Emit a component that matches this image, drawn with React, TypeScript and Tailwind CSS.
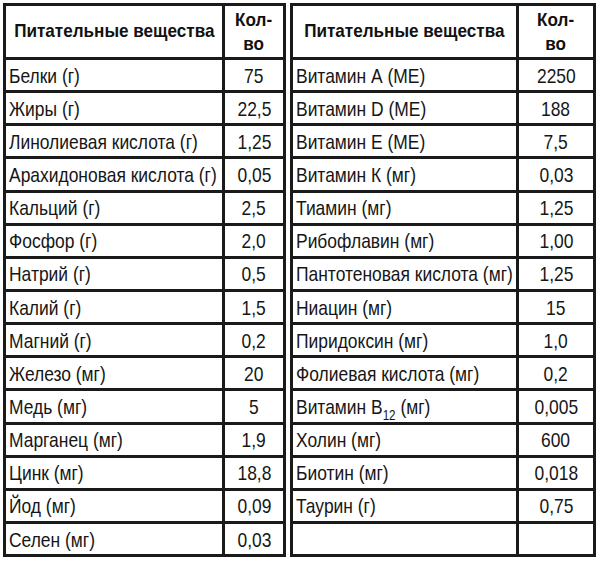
import React from "react";

type Row = { name: React.ReactNode; val: string };

const left: Row[] = [
  { name: "Белки (г)", val: "75" },
  { name: "Жиры (г)", val: "22,5" },
  { name: "Линолиевая кислота (г)", val: "1,25" },
  { name: "Арахидоновая кислота (г)", val: "0,05" },
  { name: "Кальций (г)", val: "2,5" },
  { name: "Фосфор (г)", val: "2,0" },
  { name: "Натрий (г)", val: "0,5" },
  { name: "Калий (г)", val: "1,5" },
  { name: "Магний (г)", val: "0,2" },
  { name: "Железо (мг)", val: "20" },
  { name: "Медь (мг)", val: "5" },
  { name: "Марганец (мг)", val: "1,9" },
  { name: "Цинк (мг)", val: "18,8" },
  { name: "Йод (мг)", val: "0,09" },
  { name: "Селен (мг)", val: "0,03" },
];

const right: Row[] = [
  { name: "Витамин А (МЕ)", val: "2250" },
  { name: "Витамин D (МЕ)", val: "188" },
  { name: "Витамин Е (МЕ)", val: "7,5" },
  { name: "Витамин К (мг)", val: "0,03" },
  { name: "Тиамин (мг)", val: "1,25" },
  { name: "Рибофлавин (мг)", val: "1,00" },
  { name: "Пантотеновая кислота (мг)", val: "1,25" },
  { name: "Ниацин (мг)", val: "15" },
  { name: "Пиридоксин (мг)", val: "1,0" },
  { name: "Фолиевая кислота (мг)", val: "0,2" },
  {
    name: (
      <>
        Витамин B<span className="text-[14px] relative top-[6px]">12</span> (мг)
      </>
    ),
    val: "0,005",
  },
  { name: "Холин (мг)", val: "600" },
  { name: "Биотин (мг)", val: "0,018" },
  { name: "Таурин (г)", val: "0,75" },
  { name: "", val: "" },
];

function Table({ rows, nameW, valW }: { rows: Row[]; nameW: string; valW: string }) {
  return (
    <div className="h-[554px] border-[3px] border-[#1a1a1a] flex flex-col">
      <div className="flex h-[51px] shrink-0 font-bold text-[19px] font-['Liberation_Sans',Arial,sans-serif] text-[#111]">
        <div className={`${nameW} shrink-0 flex items-center justify-center whitespace-nowrap`}>
          <span className="inline-block origin-center scale-x-[0.9]">Питательные вещества</span>
        </div>
        <div className={`${valW} shrink-0 border-l-[3px] border-[#1a1a1a] flex flex-col items-center justify-center leading-[24px] pt-[1px]`}>
          <span className="inline-block origin-center scale-x-[0.9]">Кол-</span>
          <span className="inline-block origin-center scale-x-[0.9]">во</span>
        </div>
      </div>
      {rows.map((r, i) => (
        <div key={i} className="flex flex-1 border-t-[3px] border-[#1a1a1a] text-[21px] font-['Liberation_Sans',Arial,sans-serif] text-[#161616] leading-none">
          <div className={`${nameW} shrink-0 flex items-center pl-[3px] whitespace-nowrap`}>
            <span className="inline-block origin-left scale-x-[0.83]">{r.name}</span>
          </div>
          <div className={`${valW} shrink-0 border-l-[3px] border-[#1a1a1a] flex items-center justify-center whitespace-nowrap`}>
            <span className="inline-block origin-center scale-x-[0.83]">{r.val}</span>
          </div>
        </div>
      ))}
    </div>
  );
}

export default function App() {
  return (
    <div className="w-[596px] h-[562px] bg-white pt-[3px] pl-[3px] flex gap-[4px]">
      <div className="w-[283px]">
        <Table rows={left} nameW="w-[216px]" valW="w-[61px]" />
      </div>
      <div className="w-[306px]">
        <Table rows={right} nameW="w-[223px]" valW="w-[77px]" />
      </div>
    </div>
  );
}
